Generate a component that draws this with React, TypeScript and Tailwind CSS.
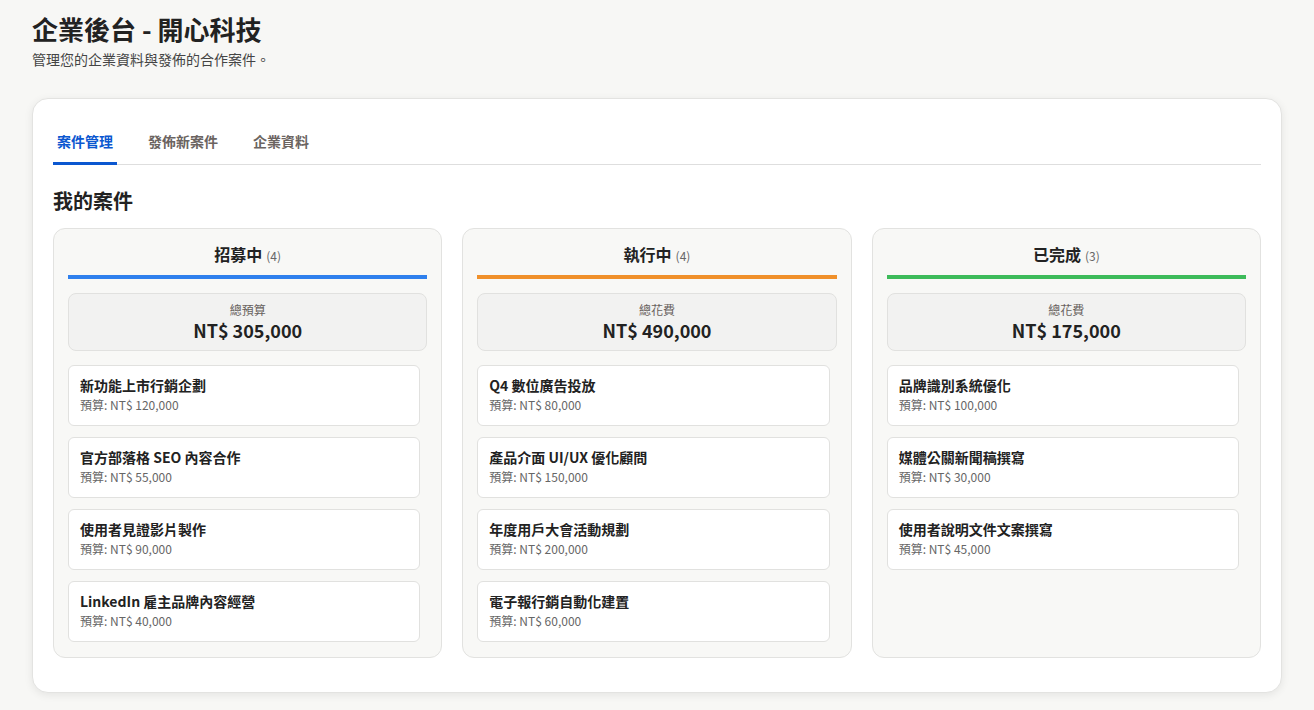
import React from 'react';

interface Project {
  title: string;
  budget: string;
}

interface Column {
  name: string;
  count: number;
  bar: string;
  label: string;
  total: string;
  items: Project[];
}

const columns: Column[] = [
  {
    name: '招募中',
    count: 4,
    bar: 'bg-[#2f80ed]',
    label: '總預算',
    total: 'NT$ 305,000',
    items: [
      { title: '新功能上市行銷企劃', budget: 'NT$ 120,000' },
      { title: '官方部落格 SEO 內容合作', budget: 'NT$ 55,000' },
      { title: '使用者見證影片製作', budget: 'NT$ 90,000' },
      { title: 'LinkedIn 雇主品牌內容經營', budget: 'NT$ 40,000' },
    ],
  },
  {
    name: '執行中',
    count: 4,
    bar: 'bg-[#f0902a]',
    label: '總花費',
    total: 'NT$ 490,000',
    items: [
      { title: 'Q4 數位廣告投放', budget: 'NT$ 80,000' },
      { title: '產品介面 UI/UX 優化顧問', budget: 'NT$ 150,000' },
      { title: '年度用戶大會活動規劃', budget: 'NT$ 200,000' },
      { title: '電子報行銷自動化建置', budget: 'NT$ 60,000' },
    ],
  },
  {
    name: '已完成',
    count: 3,
    bar: 'bg-[#3dbb5a]',
    label: '總花費',
    total: 'NT$ 175,000',
    items: [
      { title: '品牌識別系統優化', budget: 'NT$ 100,000' },
      { title: '媒體公關新聞稿撰寫', budget: 'NT$ 30,000' },
      { title: '使用者說明文件文案撰寫', budget: 'NT$ 45,000' },
    ],
  },
];

const tabs = ['案件管理', '發佈新案件', '企業資料'];

function KanbanColumn({ col }: { col: Column }) {
  return (
    <div className="flex flex-col p-3.5 pt-[13px] pb-[15px] bg-[#f8f8f6] border border-[#e2e2e0] rounded-xl">
      <div className="text-center leading-6">
        <span className="text-base font-bold text-[#222]">{col.name}</span>
        <span className="ml-1 text-xs text-[#666]">({col.count})</span>
      </div>
      <div className={`mt-[9px] h-1 ${col.bar}`} />
      <div className="mt-3.5 py-2 bg-[#f2f2f1] border border-[#e1e1df] rounded-lg text-center">
        <div className="text-xs leading-4 text-[#67615d]">{col.label}</div>
        <div className="text-lg font-bold leading-6 text-[#222]">{col.total}</div>
      </div>
      <div className="mt-3.5 pr-[7px] flex flex-col gap-[11px]">
        {col.items.map((p) => (
          <div key={p.title} className="px-[11px] pt-[9px] pb-[11px] bg-white border border-[#e1e1df] rounded-md">
            <div className="text-sm font-bold leading-5 text-[#222]">{p.title}</div>
            <div className="text-xs leading-[19px] text-[#666]">預算: {p.budget}</div>
          </div>
        ))}
      </div>
    </div>
  );
}

export default function App() {
  return (
    <div
      className="min-h-[710px] bg-[#f7f7f5] px-8 pt-[11px] pb-[18px]"
      style={{ fontFamily: '"Noto Sans CJK TC", "Noto Sans", sans-serif' }}
    >
      <h1 className="text-[26px] font-bold leading-9 text-[#222]">企業後台 - 開心科技</h1>
      <p className="mt-0.5 text-sm leading-5 text-[#444]">管理您的企業資料與發佈的合作案件。</p>

      <div className="mt-[29px] bg-white border border-[#e3e3e1] rounded-2xl shadow-[0_2px_8px_rgba(0,0,0,0.08)] px-5 pt-6 pb-[34px]">
        <div className="flex gap-[27px] border-b border-[#dedede]">
          {tabs.map((t, i) => (
            <div
              key={t}
              className={
                i === 0
                  ? 'px-1 pt-2 pb-[11px] text-sm font-bold text-[#0b57d0] border-b-[3px] border-[#0b57d0] -mb-px'
                  : 'px-1 pt-2 pb-[11px] text-sm font-bold text-[#6b6461] border-b-[3px] border-transparent -mb-px'
              }
            >
              {t}
            </div>
          ))}
        </div>

        <h2 className="mt-[22px] text-xl font-bold leading-7 text-[#222]">我的案件</h2>

        <div className="mt-[13px] grid grid-cols-3 gap-5 items-stretch">
          {columns.map((c) => (
            <KanbanColumn key={c.name} col={c} />
          ))}
        </div>
      </div>
    </div>
  );
}
